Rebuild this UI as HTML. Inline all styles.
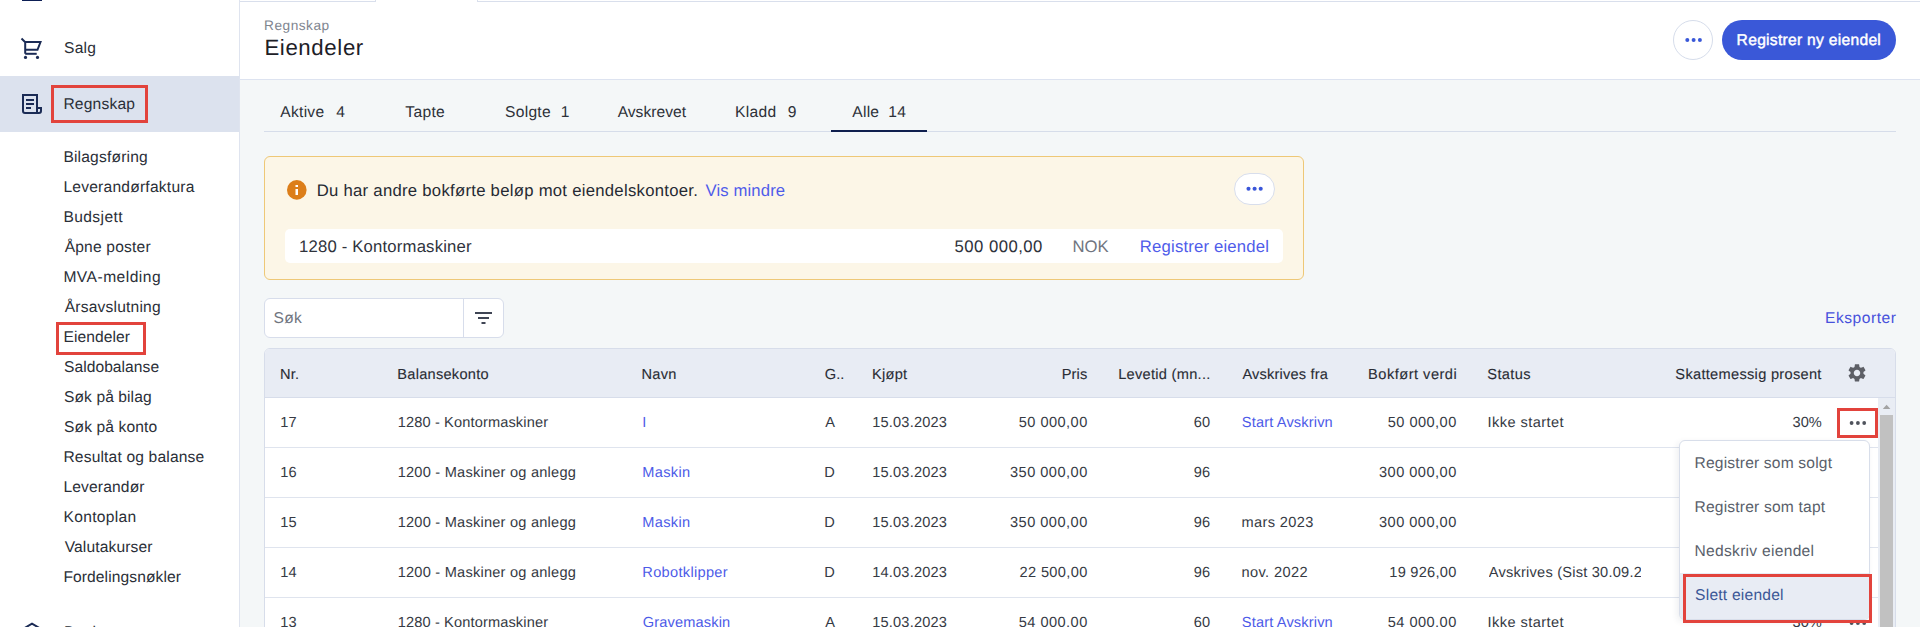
<!DOCTYPE html>
<html><head><meta charset="utf-8">
<style>
html,body{margin:0;padding:0;}
body{width:1920px;height:627px;overflow:hidden;position:relative;background:#f4f7f8;font-family:"Liberation Sans",sans-serif;}
.a{position:absolute;box-sizing:border-box;}
.t{position:absolute;white-space:nowrap;display:block;text-rendering:geometricPrecision;}
svg{position:absolute;left:0;top:0;}
</style></head><body>
<!-- sidebar -->
<div class="a" style="left:0;top:0;width:239px;height:627px;background:#ffffff;"></div>
<div class="a" style="left:239px;top:0;width:1px;height:627px;background:#dfe4ef;"></div>
<div class="a" style="left:0;top:76px;width:239px;height:56px;background:#dce2ee;"></div>
<div class="a" style="left:51px;top:85px;width:97px;height:38px;border:3px solid #e2433c;z-index:2;"></div>
<div class="a" style="left:56px;top:322px;width:90px;height:33px;border:3px solid #e2433c;z-index:2;"></div>
<!-- header -->
<div class="a" style="left:240px;top:0;width:1680px;height:79px;background:#ffffff;"></div>
<div class="a" style="left:240px;top:79px;width:1680px;height:1px;background:#dde3f0;"></div>
<div class="a" style="left:240px;top:1px;width:136px;height:1px;background:#d9dfec;"></div>
<div class="a" style="left:375px;top:0px;width:1px;height:2px;background:#d9dfec;"></div>
<div class="a" style="left:477px;top:1px;width:1443px;height:1px;background:#d9dfec;"></div>
<div class="a" style="left:477px;top:0px;width:1px;height:2px;background:#d9dfec;"></div>
<div class="a" style="left:1673px;top:20px;width:40px;height:40px;border:1px solid #d6ddeb;border-radius:50%;background:#fff;"></div>
<div class="a" style="left:1722px;top:20px;width:174px;height:40px;border-radius:20px;background:#3a58d8;"></div>
<!-- tabs -->
<div class="a" style="left:264px;top:131px;width:1632px;height:1px;background:#d6ddea;"></div>
<div class="a" style="left:831px;top:130px;width:96px;height:2px;background:#0f1f4e;"></div>
<!-- info box -->
<div class="a" style="left:264px;top:156px;width:1040px;height:124px;border:1px solid #eec877;border-radius:6px;background:#fcf6e7;"></div>
<div class="a" style="left:285px;top:229px;width:998px;height:34px;border-radius:5px;background:#ffffff;"></div>
<div class="a" style="left:1234px;top:173px;width:41px;height:32px;border:1px solid #d8deec;border-radius:16px;background:#ffffff;"></div>
<!-- search -->
<div class="a" style="left:264px;top:298px;width:240px;height:40px;border:1px solid #d7ddeb;border-radius:6px;background:#ffffff;"></div>
<div class="a" style="left:463px;top:299px;width:1px;height:38px;background:#d7ddeb;"></div>
<!-- table -->
<div class="a" style="left:264px;top:348px;width:1632px;height:300px;border:1px solid #d7ddea;border-radius:6px;background:#ffffff;overflow:hidden;">
  <div class="a" style="left:0;top:0;width:1630px;height:48px;background:#e8ecf4;"></div>
  <div class="a" style="left:0;top:48px;width:1630px;height:1px;background:#d7ddea;"></div>
  <div class="a" style="left:0;top:98px;width:1613px;height:1px;background:#dfe4ee;"></div>
  <div class="a" style="left:0;top:148px;width:1613px;height:1px;background:#dfe4ee;"></div>
  <div class="a" style="left:0;top:198px;width:1613px;height:1px;background:#dfe4ee;"></div>
  <div class="a" style="left:0;top:248px;width:1613px;height:1px;background:#dfe4ee;"></div>
  <div class="a" style="left:1613px;top:49px;width:17px;height:260px;background:#e9edf4;"></div>
  <div class="a" style="left:1615px;top:66px;width:13px;height:260px;background:#c1c1c1;"></div>
</div>
<div class="a" style="left:1837px;top:408px;width:41px;height:30px;border:3px solid #e2433c;z-index:2;"></div>
<!-- menu -->
<div class="a" style="left:1679px;top:440px;width:191px;height:180px;border:1px solid #d8deea;border-radius:6px;background:#ffffff;box-shadow:-2px 2px 6px rgba(40,50,80,0.08);z-index:5;overflow:hidden;">
  <div class="a" style="left:0;top:132px;width:189px;height:47px;background:#e8ecf4;"></div>
</div>
<div class="a" style="left:1683px;top:574px;width:189px;height:49px;border:3px solid #e2433c;z-index:7;"></div>
<svg width="1920" height="627" viewBox="0 0 1920 627" style="z-index:4;pointer-events:none">
  <!-- top icon remnant -->
  <rect x="22" y="0" width="20" height="1" fill="#0d1f55"/>
  <!-- cart -->
  <g fill="none" stroke="#1b2b55" stroke-width="2" stroke-linecap="butt" stroke-linejoin="miter">
    <path d="M21.5 38.5 L25 42"/>
    <path d="M25.2 53.8 V42 H40.5 L37.5 49.8 H25.2"/>
    <path d="M25.2 53.8 H36.7"/>
  </g>
  <circle cx="25.5" cy="57.4" r="1.6" fill="#1b2b55"/>
  <circle cx="37.5" cy="57.4" r="1.6" fill="#1b2b55"/>
  <!-- regnskap doc -->
  <g fill="none" stroke="#1b2b55" stroke-width="2">
    <path d="M37 108 V95 H23 V111 Q23 113 25 113 H39 Q41 113 41 111 V108 H37 V113"/>
  </g>
  <g fill="#1b2b55">
    <rect x="26" y="99" width="8" height="2"/>
    <rect x="26" y="103" width="8" height="2"/>
    <rect x="26" y="107" width="5" height="2"/>
  </g>
  <!-- bank roof -->
  <path d="M22.5 629.3 L32 623.6 L41.5 629.3" fill="none" stroke="#1b2b55" stroke-width="2"/>
  <circle cx="32" cy="628.2" r="1.2" fill="#1b2b55"/>
  <!-- header dots -->
  <g fill="#3a58d8"><circle cx="1687.3" cy="40" r="2"/><circle cx="1693.6" cy="40" r="2"/><circle cx="1699.9" cy="40" r="2"/></g>
  <!-- info icon -->
  <circle cx="296.8" cy="189.9" r="9.8" fill="#dc7e1a"/>
  <rect x="295.5" y="189" width="2.5" height="6" fill="#fff"/>
  <rect x="295.5" y="185" width="2.5" height="2" fill="#fff"/>
  <!-- info dots -->
  <g fill="#3a56d9"><circle cx="1248.5" cy="188.8" r="2.05"/><circle cx="1254.6" cy="188.8" r="2.05"/><circle cx="1260.7" cy="188.8" r="2.05"/></g>
  <!-- filter -->
  <g fill="#3f4554"><rect x="475" y="312" width="17" height="2"/><rect x="478" y="317" width="11" height="2"/><rect x="481.5" y="322" width="4" height="2"/></g>
  <!-- gear -->
  <g transform="translate(1846.2,362.1) scale(0.9)">
    <path fill="#5d5f66" d="M19.14 12.94c.04-.3.06-.61.06-.94 0-.32-.02-.64-.07-.94l2.03-1.58c.18-.14.23-.41.12-.61l-1.92-3.32c-.12-.22-.37-.29-.59-.22l-2.39.96c-.5-.38-1.030-.7-1.62-.94l-.36-2.54c-.04-.24-.24-.41-.48-.41h-3.84c-.24 0-.43.17-.47.41l-.36 2.54c-.59.24-1.13.57-1.62.94l-2.39-.96c-.22-.08-.47 0-.59.22L2.74 8.87c-.12.21-.08.47.12.61l2.03 1.58c-.05.3-.09.63-.09.94s.02.64.07.94l-2.03 1.58c-.18.14-.23.41-.12.61l1.92 3.32c.12.22.37.29.59.22l2.39-.96c.5.38 1.03.7 1.62.94l.36 2.54c.05.24.24.41.48.41h3.84c.24 0 .44-.17.47-.41l.36-2.54c.59-.24 1.13-.56 1.62-.94l2.39.96c.22.08.47 0 .59-.22l1.92-3.32c.12-.22.07-.47-.12-.61l-2.01-1.58zM12 15.6c-1.98 0-3.6-1.62-3.6-3.6s1.62-3.6 3.6-3.6 3.6 1.62 3.6 3.6-1.62 3.6-3.6 3.6z"/>
  </g>
  <!-- row dots -->
  <g fill="#4f535c"><circle cx="1851.6" cy="423" r="1.9"/><circle cx="1857.9" cy="423" r="1.9"/><circle cx="1864.2" cy="423" r="1.9"/></g>
  <g fill="#4f535c"><circle cx="1851.6" cy="623" r="1.9"/><circle cx="1857.9" cy="623" r="1.9"/><circle cx="1864.2" cy="623" r="1.9"/></g>
  <!-- scroll arrow -->
  <path d="M1882.8 409 L1886.6 404.8 L1890.4 409 Z" fill="#a3a3a3"/>
</svg>
<span class=t style="top:41.00px;font-size:15.6px;line-height:15.6px;color:#2b2f38;z-index:1;letter-spacing:0.250px;left:63.99px;">Salg</span>
<span class=t style="top:97.00px;font-size:15.6px;line-height:15.6px;color:#2b2f38;z-index:1;letter-spacing:0.202px;left:63.42px;">Regnskap</span>
<span class=t style="top:150.00px;font-size:15.6px;line-height:15.6px;color:#2b2f38;z-index:1;letter-spacing:0.176px;left:63.42px;">Bilagsføring</span>
<span class=t style="top:180.00px;font-size:15.6px;line-height:15.6px;color:#2b2f38;z-index:1;letter-spacing:0.222px;left:63.42px;">Leverandørfaktura</span>
<span class=t style="top:210.00px;font-size:15.6px;line-height:15.6px;color:#2b2f38;z-index:1;letter-spacing:0.405px;left:63.42px;">Budsjett</span>
<span class=t style="top:240.00px;font-size:15.6px;line-height:15.6px;color:#2b2f38;z-index:1;letter-spacing:0.190px;left:64.67px;">Åpne poster</span>
<span class=t style="top:270.00px;font-size:15.6px;line-height:15.6px;color:#2b2f38;z-index:1;letter-spacing:0.475px;left:63.42px;">MVA-melding</span>
<span class=t style="top:300.00px;font-size:15.6px;line-height:15.6px;color:#2b2f38;z-index:1;letter-spacing:0.194px;left:64.67px;">Årsavslutning</span>
<span class=t style="top:330.00px;font-size:15.6px;line-height:15.6px;color:#2b2f38;z-index:1;letter-spacing:0.069px;left:63.42px;">Eiendeler</span>
<span class=t style="top:360.00px;font-size:15.6px;line-height:15.6px;color:#2b2f38;z-index:1;letter-spacing:0.053px;left:63.99px;">Saldobalanse</span>
<span class=t style="top:390.00px;font-size:15.6px;line-height:15.6px;color:#2b2f38;z-index:1;letter-spacing:0.084px;left:63.99px;">Søk på bilag</span>
<span class=t style="top:420.00px;font-size:15.6px;line-height:15.6px;color:#2b2f38;z-index:1;letter-spacing:0.125px;left:63.99px;">Søk på konto</span>
<span class=t style="top:450.00px;font-size:15.6px;line-height:15.6px;color:#2b2f38;z-index:1;letter-spacing:0.163px;left:63.42px;">Resultat og balanse</span>
<span class=t style="top:480.00px;font-size:15.6px;line-height:15.6px;color:#2b2f38;z-index:1;letter-spacing:0.154px;left:63.42px;">Leverandør</span>
<span class=t style="top:510.00px;font-size:15.6px;line-height:15.6px;color:#2b2f38;z-index:1;letter-spacing:0.332px;left:63.42px;">Kontoplan</span>
<span class=t style="top:540.00px;font-size:15.6px;line-height:15.6px;color:#2b2f38;z-index:1;letter-spacing:0.131px;left:64.63px;">Valutakurser</span>
<span class=t style="top:570.00px;font-size:15.6px;line-height:15.6px;color:#2b2f38;z-index:1;letter-spacing:0.093px;left:63.42px;">Fordelingsnøkler</span>
<span class=t style="top:625.00px;font-size:15.6px;line-height:15.6px;color:#2b2f38;z-index:1;letter-spacing:0.250px;left:63.92px;">Bank</span>
<span class=t style="top:19.00px;font-size:13.7px;line-height:13.7px;color:#80858f;z-index:1;letter-spacing:0.494px;left:264.08px;">Regnskap</span>
<span class=t style="top:37.00px;font-size:22.2px;line-height:22.2px;color:#1d2027;z-index:1;letter-spacing:0.642px;left:264.38px;">Eiendeler</span>
<span class=t style="top:33.00px;font-size:15.6px;line-height:15.6px;color:#ffffff;z-index:3;letter-spacing:0.291px;-webkit-text-stroke:0.45px #ffffff;left:1736.62px;">Registrer ny eiendel</span>
<span class=t style="top:105.00px;font-size:15.6px;line-height:15.6px;color:#2d3139;z-index:1;letter-spacing:0.250px;left:280.37px;">Aktive</span>
<span class=t style="top:105.00px;font-size:15.6px;line-height:15.6px;color:#2d3139;z-index:1;letter-spacing:0.250px;left:336.14px;">4</span>
<span class=t style="top:105.00px;font-size:15.6px;line-height:15.6px;color:#2d3139;z-index:1;letter-spacing:0.348px;left:405.25px;">Tapte</span>
<span class=t style="top:105.00px;font-size:15.6px;line-height:15.6px;color:#2d3139;z-index:1;letter-spacing:0.263px;left:505.09px;">Solgte</span>
<span class=t style="top:105.00px;font-size:15.6px;line-height:15.6px;color:#2d3139;z-index:1;letter-spacing:0.250px;left:560.81px;">1</span>
<span class=t style="top:105.00px;font-size:15.6px;line-height:15.6px;color:#2d3139;z-index:1;letter-spacing:0.020px;left:617.67px;">Avskrevet</span>
<span class=t style="top:105.00px;font-size:15.6px;line-height:15.6px;color:#2d3139;z-index:1;letter-spacing:0.287px;left:735.12px;">Kladd</span>
<span class=t style="top:105.00px;font-size:15.6px;line-height:15.6px;color:#2d3139;z-index:1;letter-spacing:0.250px;left:787.87px;">9</span>
<span class=t style="top:105.00px;font-size:15.6px;line-height:15.6px;color:#2d3139;z-index:1;letter-spacing:0.250px;left:852.27px;">Alle</span>
<span class=t style="top:105.00px;font-size:15.6px;line-height:15.6px;color:#2d3139;z-index:1;letter-spacing:0.250px;left:888.31px;">14</span>
<span class=t style="top:183.00px;font-size:16.7px;line-height:16.7px;color:#262a33;z-index:3;letter-spacing:0.273px;left:316.73px;">Du har andre bokførte beløp mot eiendelskontoer.</span>
<span class=t style="top:183.00px;font-size:16.7px;line-height:16.7px;color:#4f5cea;z-index:3;letter-spacing:0.120px;left:705.53px;">Vis mindre</span>
<span class=t style="top:239.00px;font-size:16.7px;line-height:16.7px;color:#2f333c;z-index:3;letter-spacing:0.186px;left:299.03px;">1280 - Kontormaskiner</span>
<span class=t style="top:239.00px;font-size:16.7px;line-height:16.7px;color:#2f333c;z-index:3;letter-spacing:0.466px;right:877.28px;">500 000,00</span>
<span class=t style="top:239.00px;font-size:16.7px;line-height:16.7px;color:#70757f;z-index:3;letter-spacing:-0.004px;right:811.32px;">NOK</span>
<span class=t style="top:239.00px;font-size:16.7px;line-height:16.7px;color:#4f5cea;z-index:3;letter-spacing:0.183px;left:1139.83px;">Registrer eiendel</span>
<span class=t style="top:311.00px;font-size:15.6px;line-height:15.6px;color:#70757f;z-index:1;letter-spacing:0.250px;left:273.59px;">Søk</span>
<span class=t style="top:311.00px;font-size:15.6px;line-height:15.6px;color:#4751dc;z-index:1;letter-spacing:0.513px;left:1825.02px;">Eksporter</span>
<span class=t style="top:368.00px;font-size:14.6px;line-height:14.6px;color:#2a2d35;z-index:1;letter-spacing:0.150px;-webkit-text-stroke:0.12px #2a2d35;left:280.10px;">Nr.</span>
<span class=t style="top:368.00px;font-size:14.6px;line-height:14.6px;color:#2a2d35;z-index:1;letter-spacing:0.260px;-webkit-text-stroke:0.12px #2a2d35;left:397.30px;">Balansekonto</span>
<span class=t style="top:368.00px;font-size:14.6px;line-height:14.6px;color:#2a2d35;z-index:1;letter-spacing:0.303px;-webkit-text-stroke:0.12px #2a2d35;left:641.50px;">Navn</span>
<span class=t style="top:368.00px;font-size:14.6px;line-height:14.6px;color:#2a2d35;z-index:1;letter-spacing:0.150px;-webkit-text-stroke:0.12px #2a2d35;left:824.67px;">G..</span>
<span class=t style="top:368.00px;font-size:14.6px;line-height:14.6px;color:#2a2d35;z-index:1;letter-spacing:0.230px;-webkit-text-stroke:0.12px #2a2d35;left:872.10px;">Kjøpt</span>
<span class=t style="top:368.00px;font-size:14.6px;line-height:14.6px;color:#2a2d35;z-index:1;letter-spacing:0.150px;-webkit-text-stroke:0.12px #2a2d35;right:832.62px;">Pris</span>
<span class=t style="top:368.00px;font-size:14.6px;line-height:14.6px;color:#2a2d35;z-index:1;letter-spacing:0.285px;-webkit-text-stroke:0.12px #2a2d35;left:1118.20px;">Levetid (mn...</span>
<span class=t style="top:368.00px;font-size:14.6px;line-height:14.6px;color:#2a2d35;z-index:1;letter-spacing:0.180px;-webkit-text-stroke:0.12px #2a2d35;left:1242.47px;">Avskrives fra</span>
<span class=t style="top:368.00px;font-size:14.6px;line-height:14.6px;color:#2a2d35;z-index:1;letter-spacing:0.489px;-webkit-text-stroke:0.12px #2a2d35;right:462.83px;">Bokført verdi</span>
<span class=t style="top:368.00px;font-size:14.6px;line-height:14.6px;color:#2a2d35;z-index:1;letter-spacing:0.357px;-webkit-text-stroke:0.12px #2a2d35;left:1487.34px;">Status</span>
<span class=t style="top:368.00px;font-size:14.6px;line-height:14.6px;color:#2a2d35;z-index:1;letter-spacing:0.301px;-webkit-text-stroke:0.12px #2a2d35;right:98.29px;">Skattemessig prosent</span>
<span class=t style="top:416.00px;font-size:14.6px;line-height:14.6px;color:#363a44;z-index:1;letter-spacing:0.150px;left:280.19px;">17</span>
<span class=t style="top:416.00px;font-size:14.6px;line-height:14.6px;color:#363a44;z-index:1;letter-spacing:0.136px;left:397.69px;">1280 - Kontormaskiner</span>
<span class=t style="top:416.00px;font-size:14.6px;line-height:14.6px;color:#4d5be8;z-index:1;letter-spacing:0.150px;left:642.15px;">I</span>
<span class=t style="top:416.00px;font-size:14.6px;line-height:14.6px;color:#363a44;z-index:1;letter-spacing:0.150px;left:825.37px;">A</span>
<span class=t style="top:416.00px;font-size:14.6px;line-height:14.6px;color:#363a44;z-index:1;letter-spacing:0.190px;left:872.19px;">15.03.2023</span>
<span class=t style="top:416.00px;font-size:14.6px;line-height:14.6px;color:#363a44;z-index:1;letter-spacing:0.452px;right:832.28px;">50 000,00</span>
<span class=t style="top:416.00px;font-size:14.6px;line-height:14.6px;color:#363a44;z-index:1;letter-spacing:0.150px;right:709.78px;">60</span>
<span class=t style="top:416.00px;font-size:14.6px;line-height:14.6px;color:#4d5be8;z-index:1;letter-spacing:0.150px;left:1241.84px;width:91px;overflow:hidden;">Start Avskrivning</span>
<span class=t style="top:416.00px;font-size:14.6px;line-height:14.6px;color:#363a44;z-index:1;letter-spacing:0.452px;right:463.28px;">50 000,00</span>
<span class=t style="top:416.00px;font-size:14.6px;line-height:14.6px;color:#363a44;z-index:1;letter-spacing:0.434px;left:1487.45px;width:152px;overflow:hidden;">Ikke startet</span>
<span class=t style="top:416.00px;font-size:14.6px;line-height:14.6px;color:#363a44;z-index:1;letter-spacing:0.064px;right:98.12px;">30%</span>
<span class=t style="top:466.00px;font-size:14.6px;line-height:14.6px;color:#363a44;z-index:1;letter-spacing:0.150px;left:280.19px;">16</span>
<span class=t style="top:466.00px;font-size:14.6px;line-height:14.6px;color:#363a44;z-index:1;letter-spacing:0.223px;left:397.69px;">1200 - Maskiner og anlegg</span>
<span class=t style="top:466.00px;font-size:14.6px;line-height:14.6px;color:#4d5be8;z-index:1;letter-spacing:0.336px;left:642.30px;">Maskin</span>
<span class=t style="top:466.00px;font-size:14.6px;line-height:14.6px;color:#363a44;z-index:1;letter-spacing:0.150px;left:824.20px;">D</span>
<span class=t style="top:466.00px;font-size:14.6px;line-height:14.6px;color:#363a44;z-index:1;letter-spacing:0.190px;left:872.19px;">15.03.2023</span>
<span class=t style="top:466.00px;font-size:14.6px;line-height:14.6px;color:#363a44;z-index:1;letter-spacing:0.475px;right:832.25px;">350 000,00</span>
<span class=t style="top:466.00px;font-size:14.6px;line-height:14.6px;color:#363a44;z-index:1;letter-spacing:0.150px;right:709.71px;">96</span>
<span class=t style="top:466.00px;font-size:14.6px;line-height:14.6px;color:#363a44;z-index:1;letter-spacing:0.475px;right:463.25px;">300 000,00</span>
<span class=t style="top:516.00px;font-size:14.6px;line-height:14.6px;color:#363a44;z-index:1;letter-spacing:0.150px;left:280.19px;">15</span>
<span class=t style="top:516.00px;font-size:14.6px;line-height:14.6px;color:#363a44;z-index:1;letter-spacing:0.223px;left:397.69px;">1200 - Maskiner og anlegg</span>
<span class=t style="top:516.00px;font-size:14.6px;line-height:14.6px;color:#4d5be8;z-index:1;letter-spacing:0.336px;left:642.30px;">Maskin</span>
<span class=t style="top:516.00px;font-size:14.6px;line-height:14.6px;color:#363a44;z-index:1;letter-spacing:0.150px;left:824.20px;">D</span>
<span class=t style="top:516.00px;font-size:14.6px;line-height:14.6px;color:#363a44;z-index:1;letter-spacing:0.190px;left:872.19px;">15.03.2023</span>
<span class=t style="top:516.00px;font-size:14.6px;line-height:14.6px;color:#363a44;z-index:1;letter-spacing:0.475px;right:832.25px;">350 000,00</span>
<span class=t style="top:516.00px;font-size:14.6px;line-height:14.6px;color:#363a44;z-index:1;letter-spacing:0.150px;right:709.71px;">96</span>
<span class=t style="top:516.00px;font-size:14.6px;line-height:14.6px;color:#363a44;z-index:1;letter-spacing:0.370px;left:1241.53px;">mars 2023</span>
<span class=t style="top:516.00px;font-size:14.6px;line-height:14.6px;color:#363a44;z-index:1;letter-spacing:0.475px;right:463.25px;">300 000,00</span>
<span class=t style="top:566.00px;font-size:14.6px;line-height:14.6px;color:#363a44;z-index:1;letter-spacing:0.150px;left:280.19px;">14</span>
<span class=t style="top:566.00px;font-size:14.6px;line-height:14.6px;color:#363a44;z-index:1;letter-spacing:0.223px;left:397.69px;">1200 - Maskiner og anlegg</span>
<span class=t style="top:566.00px;font-size:14.6px;line-height:14.6px;color:#4d5be8;z-index:1;letter-spacing:0.309px;left:642.30px;">Robotklipper</span>
<span class=t style="top:566.00px;font-size:14.6px;line-height:14.6px;color:#363a44;z-index:1;letter-spacing:0.150px;left:824.20px;">D</span>
<span class=t style="top:566.00px;font-size:14.6px;line-height:14.6px;color:#363a44;z-index:1;letter-spacing:0.190px;left:872.19px;">14.03.2023</span>
<span class=t style="top:566.00px;font-size:14.6px;line-height:14.6px;color:#363a44;z-index:1;letter-spacing:0.346px;right:832.38px;">22 500,00</span>
<span class=t style="top:566.00px;font-size:14.6px;line-height:14.6px;color:#363a44;z-index:1;letter-spacing:0.150px;right:709.71px;">96</span>
<span class=t style="top:566.00px;font-size:14.6px;line-height:14.6px;color:#363a44;z-index:1;letter-spacing:0.384px;left:1241.53px;">nov. 2022</span>
<span class=t style="top:566.00px;font-size:14.6px;line-height:14.6px;color:#363a44;z-index:1;letter-spacing:0.256px;right:463.47px;">19 926,00</span>
<span class=t style="top:566.00px;font-size:14.6px;line-height:14.6px;color:#363a44;z-index:1;letter-spacing:0.220px;left:1488.77px;width:152px;overflow:hidden;">Avskrives (Sist 30.09.2023)</span>
<span class=t style="top:616.00px;font-size:14.6px;line-height:14.6px;color:#363a44;z-index:1;letter-spacing:0.150px;left:280.19px;">13</span>
<span class=t style="top:616.00px;font-size:14.6px;line-height:14.6px;color:#363a44;z-index:1;letter-spacing:0.136px;left:397.69px;">1280 - Kontormaskiner</span>
<span class=t style="top:616.00px;font-size:14.6px;line-height:14.6px;color:#4d5be8;z-index:1;letter-spacing:0.141px;left:642.77px;">Gravemaskin</span>
<span class=t style="top:616.00px;font-size:14.6px;line-height:14.6px;color:#363a44;z-index:1;letter-spacing:0.150px;left:825.37px;">A</span>
<span class=t style="top:616.00px;font-size:14.6px;line-height:14.6px;color:#363a44;z-index:1;letter-spacing:0.190px;left:872.19px;">15.03.2023</span>
<span class=t style="top:616.00px;font-size:14.6px;line-height:14.6px;color:#363a44;z-index:1;letter-spacing:0.452px;right:832.28px;">54 000,00</span>
<span class=t style="top:616.00px;font-size:14.6px;line-height:14.6px;color:#363a44;z-index:1;letter-spacing:0.150px;right:709.78px;">60</span>
<span class=t style="top:616.00px;font-size:14.6px;line-height:14.6px;color:#4d5be8;z-index:1;letter-spacing:0.150px;left:1241.84px;width:91px;overflow:hidden;">Start Avskrivning</span>
<span class=t style="top:616.00px;font-size:14.6px;line-height:14.6px;color:#363a44;z-index:1;letter-spacing:0.452px;right:463.28px;">54 000,00</span>
<span class=t style="top:616.00px;font-size:14.6px;line-height:14.6px;color:#363a44;z-index:1;letter-spacing:0.434px;left:1487.45px;width:152px;overflow:hidden;">Ikke startet</span>
<span class=t style="top:616.00px;font-size:14.6px;line-height:14.6px;color:#363a44;z-index:1;letter-spacing:0.064px;right:98.12px;">30%</span>
<span class=t style="top:456.00px;font-size:15.6px;line-height:15.6px;color:#5a5f6b;z-index:6;letter-spacing:0.176px;left:1694.52px;">Registrer som solgt</span>
<span class=t style="top:500.00px;font-size:15.6px;line-height:15.6px;color:#5a5f6b;z-index:6;letter-spacing:0.188px;left:1694.52px;">Registrer som tapt</span>
<span class=t style="top:544.00px;font-size:15.6px;line-height:15.6px;color:#5a5f6b;z-index:6;letter-spacing:0.283px;left:1694.52px;">Nedskriv eiendel</span>
<span class=t style="top:588.00px;font-size:15.6px;line-height:15.6px;color:#3b5797;z-index:6;letter-spacing:0.219px;left:1695.09px;">Slett eiendel</span>
</body></html>
